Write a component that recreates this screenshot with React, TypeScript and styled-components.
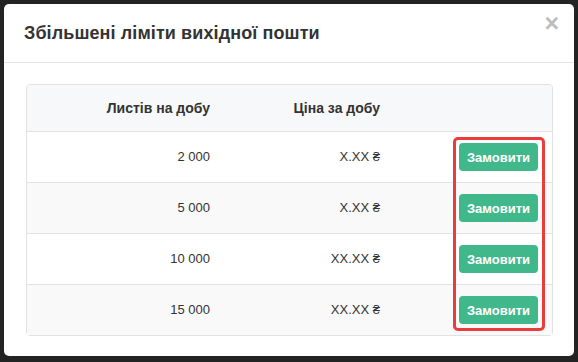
import React from "react";
import styled, { createGlobalStyle } from "styled-components";

const Global = createGlobalStyle`
  html, body { margin: 0; padding: 0; background: #232323; }
  body { font-family: "Liberation Sans", Arial, "DejaVu Sans", sans-serif; color: #333; }
  #root { padding: 4px; box-sizing: border-box; width: 578px; height: 362px; }
`;

const Modal = styled.div`
  width: 570px;
  height: 352px;
  background: #fff;
  border-radius: 5px;
  box-sizing: border-box;
  display: flex;
  flex-direction: column;
`;

const Header = styled.div`
  flex: 0 0 59px;
  box-sizing: border-box;
  border-bottom: 1px solid #e5e5e5;
  display: flex;
  align-items: flex-start;
  justify-content: space-between;
  padding: 19px 15px 0 20px;
`;

const Title = styled.h4`
  margin: 0;
  font-size: 18px;
  font-weight: bold;
  color: #333;
  line-height: 20px;
  letter-spacing: 0.1px;
`;

const Close = styled.button`
  border: 0;
  background: none;
  padding: 0;
  margin-top: -13px;
  font-family: "Liberation Sans", Arial, sans-serif;
  font-size: 25px;
  font-weight: bold;
  line-height: 26px;
  color: #bdbdbd;
  cursor: pointer;
`;

const Body = styled.div`
  flex: 0 0 auto;
  padding: 21px 21px 20px 22px;
`;

const TableWrap = styled.div`
  position: relative;
  border: 1px solid #e2e2e2;
  border-radius: 4px;
`;

const Row = styled.div<{ $bg: string; $head?: boolean }>`
  display: grid;
  grid-template-columns: 191px 170px 1fr;
  align-items: center;
  height: ${(p) => (p.$head ? "46px" : "50px")};
  background: ${(p) => p.$bg};
  border-top: ${(p) => (p.$head ? "0" : "1px solid #e2e2e2")};
  font-size: ${(p) => (p.$head ? "14px" : "13px")};
  font-weight: ${(p) => (p.$head ? "bold" : "normal")};
  &:first-child { border-radius: 4px 4px 0 0; }
  &:last-of-type { border-radius: 0 0 4px 4px; }
`;

const Cell = styled.div`
  text-align: right;
  padding-right: 8px;
  padding-bottom: 1px;
`;

const BtnCell = styled.div`
  display: flex;
  justify-content: flex-end;
  padding-right: 14px;
`;

const OrderButton = styled.button`
  width: 79px;
  height: 28px;
  border: 0;
  border-radius: 4px;
  background: #41b78c;
  color: #fff;
  font-family: "Liberation Sans", Arial, sans-serif;
  font-size: 13px;
  font-weight: bold;
  padding: 0;
  cursor: pointer;
`;

const Highlight = styled.div`
  position: absolute;
  left: 426px;
  top: 52px;
  width: 92px;
  height: 194px;
  box-sizing: border-box;
  border: 3px solid #ea3b3d;
  border-radius: 5px;
  pointer-events: none;
`;

const rows = [
  { n: "2 000", p: "X.XX ₴" },
  { n: "5 000", p: "X.XX ₴" },
  { n: "10 000", p: "XX.XX ₴" },
  { n: "15 000", p: "XX.XX ₴" },
];

export default function App() {
  return (
    <>
      <Global />
      <Modal>
        <Header>
          <Title>Збільшені ліміти вихідної пошти</Title>
          <Close aria-label="close">×</Close>
        </Header>
        <Body>
          <TableWrap>
            <Row $bg="#f7f8fa" $head>
              <Cell>Листів на добу</Cell>
              <Cell>Ціна за добу</Cell>
              <Cell />
            </Row>
            {rows.map((r, i) => (
              <Row key={r.n} $bg={i % 2 === 1 ? "#f9f9f9" : "#fff"}>
                <Cell>{r.n}</Cell>
                <Cell>{r.p}</Cell>
                <BtnCell>
                  <OrderButton>Замовити</OrderButton>
                </BtnCell>
              </Row>
            ))}
            <Highlight />
          </TableWrap>
        </Body>
      </Modal>
    </>
  );
}
